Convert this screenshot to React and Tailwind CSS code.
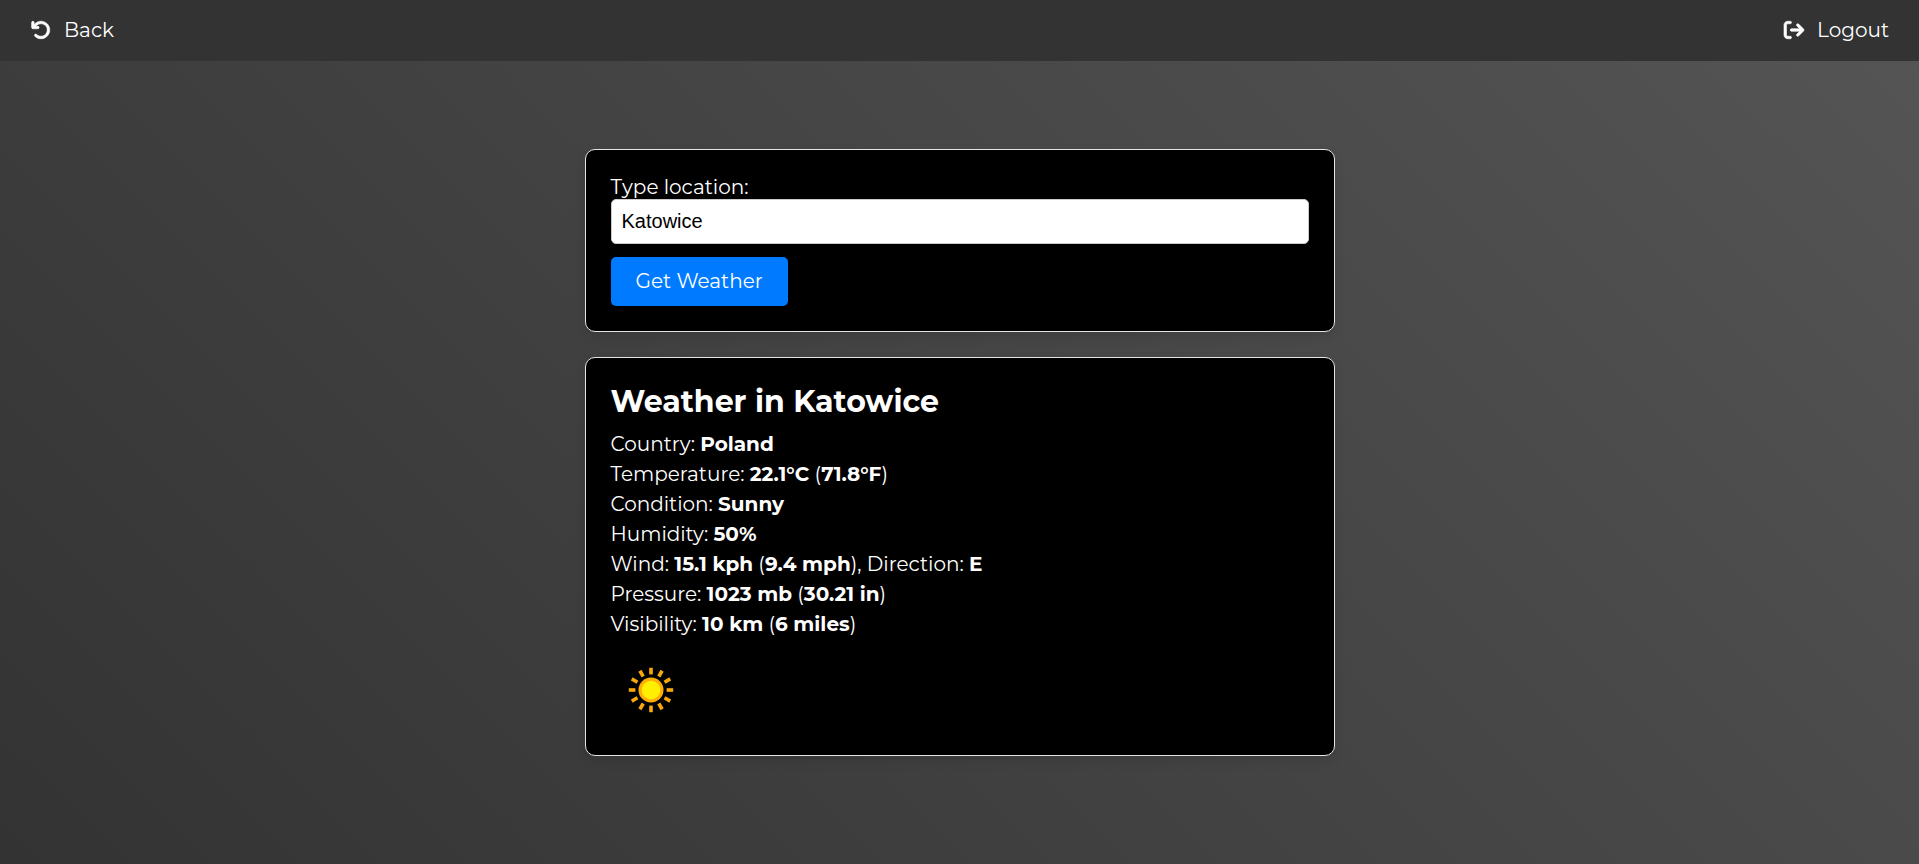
import { useState } from "react";
import { FaArrowRightFromBracket, FaArrowRotateLeft } from "react-icons/fa6";

const rays = [0, 30, 60, 90, 120, 150, 180, 210, 240, 270, 300, 330];

function SunIcon() {
  return (
    <svg viewBox="0 0 80 80" className="size-20" role="img" aria-label="Sunny">
      {rays.map((angle) => (
        <rect key={angle} x="38.2" y="17.8" width="3.6" height="6.6" fill="#f8a80a" transform={`rotate(${angle} 40 40)`} />
      ))}
      <circle cx="40" cy="40" r="12.5" fill="#ffad08" />
      <circle cx="40" cy="40" r="9.3" fill="#ffef00" />
    </svg>
  );
}

function Card({ children, className }) {
  return (
    <section className={`rounded-[10px] border border-[#e5e5e5] bg-black p-[25px] shadow-[0_5px_12px_rgba(0,0,0,0.1)] ${className}`}>
      {children}
    </section>
  );
}

export default function App() {
  const [location, setLocation] = useState("Katowice");

  return (
    <div className="min-h-screen bg-linear-45 from-[#333] to-[#555] font-['Montserrat','Inter',sans-serif] text-xl text-white">
      <nav className="flex h-[61px] items-center justify-between bg-[#333] pr-[30px] pb-0.5 pl-[31px]">
        <a href="#back" className="flex items-center gap-[13px]">
          <FaArrowRotateLeft className="size-5 overflow-visible stroke-current stroke-[16]" />
          Back
        </a>
        <a href="#logout" className="flex items-center gap-[13px]">
          <FaArrowRightFromBracket className="size-5 overflow-visible stroke-current stroke-[16]" />
          Logout
        </a>
      </nav>
      <main className="mx-auto flex max-w-[750px] flex-col gap-[25px] py-[88px]">
        <Card>
          <form onSubmit={(e) => e.preventDefault()}>
            <label htmlFor="location" className="block leading-6">
              Type location:
            </label>
            <input
              id="location"
              type="text"
              value={location}
              onChange={(e) => setLocation(e.target.value)}
              className="block h-[45px] w-full rounded-[5px] border border-[#ccc] bg-white px-2.5 font-['Liberation_Sans',Arial,sans-serif] text-xl text-black"
            />
            <button type="submit" className="mt-[13px] block h-[49px] rounded-[5px] bg-[#007bff] px-[25px] pb-0.5 text-white">
              Get Weather
            </button>
          </form>
        </Card>
        <Card className="leading-[30px]">
          <h2 className="mb-2 text-3xl leading-[38px] font-bold">Weather in Katowice</h2>
          <p>Country: <strong>Poland</strong></p>
          <p>Temperature: <strong>22.1°C</strong> (<strong>71.8°F</strong>)</p>
          <p>Condition: <strong>Sunny</strong></p>
          <p>Humidity: <strong>50%</strong></p>
          <p>Wind: <strong>15.1 kph</strong> (<strong>9.4 mph</strong>), Direction: <strong>E</strong></p>
          <p>Pressure: <strong>1023 mb</strong> (<strong>30.21 in</strong>)</p>
          <p>Visibility: <strong>10 km</strong> (<strong>6 miles</strong>)</p>
          <div className="mt-[11px]">
            <SunIcon />
          </div>
        </Card>
      </main>
    </div>
  );
}
